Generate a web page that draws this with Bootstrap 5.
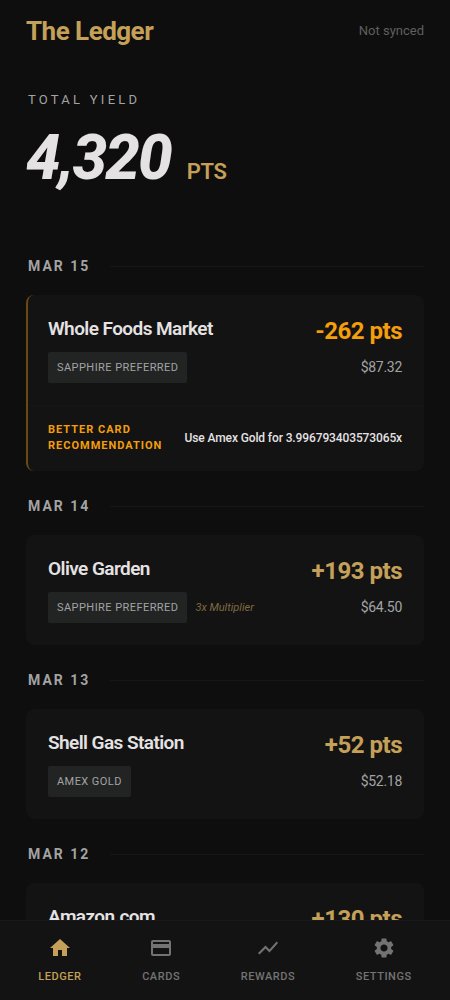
<!DOCTYPE html>
<html lang="en" data-bs-theme="dark">
<head>
<meta charset="utf-8">
<meta name="viewport" content="width=device-width, initial-scale=1">
<title>The Ledger</title>
<link href="https://cdn.jsdelivr.net/npm/bootstrap@5.3.0/dist/css/bootstrap.min.css" rel="stylesheet">
<style>
:root { --gold: #c5a059; --amber: #f59e0b; --ink: #e5e2e3; --soft: #a3a3a3; --surface: #131313; --hairline: #161616; }
body { background: #0e0e0e; color: var(--ink); font-family: Roboto, "Liberation Sans", sans-serif; }
.page { padding: 0 26px 104px; }
.topbar { height: 61px; }
.brand { font-size: 26px; line-height: 32px; letter-spacing: -0.02em; color: var(--gold); }
.sync { font-size: 13px; color: #5f5f5f; }
.gold { color: var(--gold); }
.eyebrow { font-size: 13px; line-height: 20px; letter-spacing: 0.25em; color: var(--soft); padding-left: 2px; }
.total { font-size: 62px; line-height: 64px; letter-spacing: -0.03em; font-weight: 800; }
.unit { font-size: 22px; line-height: 28px; letter-spacing: -0.02em; }
.summary { padding: 29px 0 66px; }
.day { font-size: 14px; line-height: 20px; letter-spacing: 2px; color: var(--soft); gap: 20px; margin-bottom: 19px; }
.day h2 { font: inherit; font-weight: 700; color: inherit; padding-left: 2px; }
.day-rule { height: 1px; background: var(--hairline); }
.entry { background: var(--surface); border-radius: 8px; overflow: hidden; margin-bottom: 25px; }
.entry-main { padding: 22px; }
.entry-alert { border-left: 2px solid #6a4a12; }
.entry-alert .entry-main, .entry-alert .tip { padding-left: 20px; }
.merchant { font-size: 19px; line-height: 24px; letter-spacing: -0.03em; color: var(--ink); margin-bottom: 11px; }
.chip { font-size: 11px; line-height: 15px; letter-spacing: 0.04em; padding: 8px 9px; background: #222424; color: var(--soft); border-radius: 2px; }
.multi { font-size: 11px; line-height: 15px; color: #806a40; }
.points { font-size: 24px; line-height: 28px; letter-spacing: -0.02em; margin-bottom: 12px; }
.amount { font-size: 14px; line-height: 20px; letter-spacing: -0.02em; color: var(--soft); }
.amber { color: var(--amber); }
.tip { border-top: 1px solid var(--hairline); padding: 16px 22px 17px; font-size: 12px; line-height: 16px; letter-spacing: -0.01em; }
.tip-label { font-size: 11px; letter-spacing: 1px; width: 124px; }
.tabs { background: var(--surface); border-top: 1px solid #191919; height: 80px; padding: 15px 8px 0; }
.tab { color: #737373; font-size: 11px; line-height: 16px; letter-spacing: 0.05em; gap: 9px; }
.tab.active { color: var(--gold); }
</style>
</head>
<body>
<div class="page">
  <header class="topbar d-flex align-items-center justify-content-between">
    <h1 class="brand fw-bold mb-0">The Ledger</h1>
    <span class="sync">Not synced</span>
  </header>
  <main>
    <section class="summary">
      <div class="eyebrow">TOTAL YIELD</div>
      <div class="d-flex align-items-baseline gap-3 mt-3">
        <span class="total fst-italic">4,320</span>
        <span class="unit gold fw-semibold">PTS</span>
      </div>
    </section>

    <section>
      <div class="day d-flex align-items-center"><h2 class="mb-0">MAR 15</h2><div class="day-rule flex-grow-1"></div></div>
      <article class="entry entry-alert">
        <div class="entry-main d-flex justify-content-between">
          <div>
            <h3 class="merchant fw-semibold">Whole Foods Market</h3>
            <div class="d-flex align-items-center gap-2"><span class="chip">SAPPHIRE PREFERRED</span></div>
          </div>
          <div class="text-end"><div class="points amber fw-bold">-262 pts</div><div class="amount">$87.32</div></div>
        </div>
        <div class="tip d-flex align-items-center justify-content-between">
          <span class="tip-label amber fw-bold">BETTER CARD RECOMMENDATION</span>
          <span class="fw-medium text-nowrap">Use Amex Gold for 3.996793403573065x</span>
        </div>
      </article>
    </section>

    <section>
      <div class="day d-flex align-items-center"><h2 class="mb-0">MAR 14</h2><div class="day-rule flex-grow-1"></div></div>
      <article class="entry">
        <div class="entry-main d-flex justify-content-between">
          <div>
            <h3 class="merchant fw-semibold">Olive Garden</h3>
            <div class="d-flex align-items-center gap-2"><span class="chip">SAPPHIRE PREFERRED</span><span class="multi fst-italic">3x Multiplier</span></div>
          </div>
          <div class="text-end"><div class="points gold fw-bold">+193 pts</div><div class="amount">$64.50</div></div>
        </div>
      </article>
    </section>

    <section>
      <div class="day d-flex align-items-center"><h2 class="mb-0">MAR 13</h2><div class="day-rule flex-grow-1"></div></div>
      <article class="entry">
        <div class="entry-main d-flex justify-content-between">
          <div>
            <h3 class="merchant fw-semibold">Shell Gas Station</h3>
            <div class="d-flex align-items-center gap-2"><span class="chip">AMEX GOLD</span></div>
          </div>
          <div class="text-end"><div class="points gold fw-bold">+52 pts</div><div class="amount">$52.18</div></div>
        </div>
      </article>
    </section>

    <section>
      <div class="day d-flex align-items-center"><h2 class="mb-0">MAR 12</h2><div class="day-rule flex-grow-1"></div></div>
      <article class="entry">
        <div class="entry-main d-flex justify-content-between">
          <h3 class="merchant fw-semibold">Amazon.com</h3>
          <div class="points gold fw-bold">+130 pts</div>
        </div>
      </article>
    </section>
  </main>
</div>

<nav class="tabs fixed-bottom d-flex justify-content-around align-items-start">
  <a href="#" class="tab active d-flex flex-column align-items-center text-decoration-none fw-medium" aria-current="page">
    <svg width="24" height="24" viewBox="0 0 24 24" fill="currentColor" aria-hidden="true"><path d="M10 20v-6h4v6h5v-8h3L12 3 2 12h3v8z"/></svg>LEDGER</a>
  <a href="#" class="tab d-flex flex-column align-items-center text-decoration-none fw-medium">
    <svg width="24" height="24" viewBox="0 0 24 24" fill="currentColor" aria-hidden="true"><path d="M20 4H4c-1.110 0-1.990.890-1.990 2L2 18c0 1.110.890 2 2 2h16c1.110 0 2-.890 2-2V6c0-1.110-.890-2-2-2zm0 14H4v-6h16v6zm0-10H4V6h16v2z"/></svg>CARDS</a>
  <a href="#" class="tab d-flex flex-column align-items-center text-decoration-none fw-medium">
    <svg width="24" height="24" viewBox="0 0 24 24" fill="currentColor" aria-hidden="true"><path d="M3.500 18.490l6-6.010 4 4L22 6.920l-1.410-1.410-7.090 7.970-4-4L2 16.990z"/></svg>REWARDS</a>
  <a href="#" class="tab d-flex flex-column align-items-center text-decoration-none fw-medium">
    <svg width="24" height="24" viewBox="0 0 24 24" fill="currentColor" aria-hidden="true"><path d="M19.140 12.940c.040-.300.060-.610.060-.940 0-.320-.020-.640-.070-.940l2.030-1.580c.180-.140.230-.410.120-.610l-1.920-3.320c-.120-.220-.370-.290-.590-.220l-2.390.960c-.500-.380-1.030-.700-1.620-.940l-.360-2.540c-.040-.240-.240-.410-.480-.410h-3.840c-.240 0-.430.170-.470.410l-.360 2.540c-.590.240-1.130.570-1.620.940l-2.390-.960c-.220-.080-.470 0-.590.220L2.740 8.870c-.120.210-.080.470.120.610l2.030 1.580c-.050.300-.090.630-.090.940s.020.640.070.940l-2.030 1.580c-.180.140-.230.410-.120.610l1.920 3.320c.120.220.370.290.590.220l2.390-.960c.500.380 1.030.700 1.620.940l.360 2.540c.050.240.240.410.480.410h3.840c.240 0 .440-.170.470-.410l.360-2.540c.590-.240 1.130-.560 1.620-.940l2.390.960c.220.080.470 0 .590-.220l1.920-3.320c.120-.220.070-.470-.120-.610l-2.010-1.580zM12 15.600c-1.980 0-3.600-1.620-3.600-3.600s1.620-3.600 3.600-3.600 3.600 1.620 3.600 3.600-1.620 3.600-3.600 3.600z"/></svg>SETTINGS</a>
</nav>
<script src="https://cdn.jsdelivr.net/npm/bootstrap@5.3.0/dist/js/bootstrap.bundle.min.js"></script>
</body>
</html>
